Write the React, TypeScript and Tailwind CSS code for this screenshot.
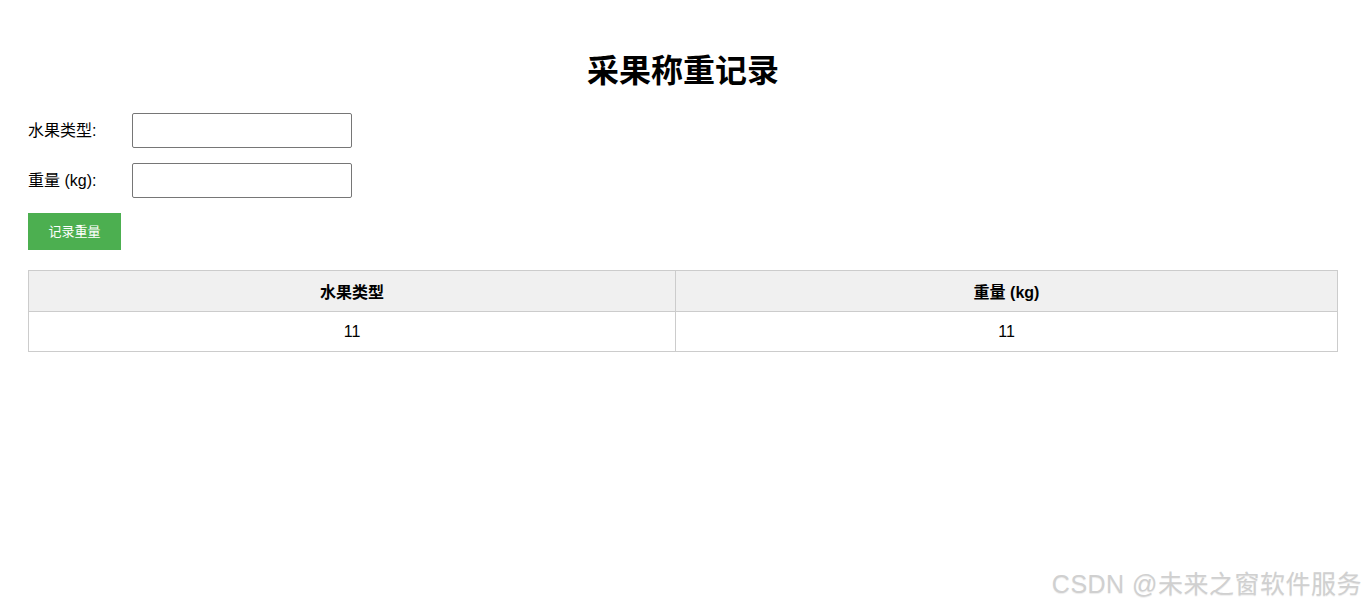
export default function App() {
  const font = { fontFamily: '"Liberation Sans", "Noto Sans CJK SC", sans-serif' };
  return (
    <div className="relative min-h-[607px] bg-white text-black px-[28px] pt-[53px]" style={font}>
      <h1 className="text-[32px] leading-[37px] font-bold text-center mb-[23px]">采果称重记录</h1>
      <div className="flex flex-col gap-[15px]">
        <div className="flex items-center">
          <label className="w-[104px] text-[16px] leading-[18px]">水果类型:</label>
          <input className="w-[220px] h-[35px] border border-[#767676] rounded-[2px] px-2 outline-none" />
        </div>
        <div className="flex items-center">
          <label className="w-[104px] text-[16px] leading-[18px]">重量 (kg):</label>
          <input className="w-[220px] h-[35px] border border-[#767676] rounded-[2px] px-2 outline-none" />
        </div>
        <div>
          <button className="w-[93px] h-[37px] bg-[#4caf50] text-white text-[13px] leading-[15px]">记录重量</button>
        </div>
      </div>
      <div className="mt-[20px] border border-[#cccccc] grid grid-cols-[647px_1fr] text-[16px]">
        <div className="h-[41px] pt-[3px] bg-[#f0f0f0] border-r border-b border-[#cccccc] flex items-center justify-center font-bold">水果类型</div>
        <div className="h-[41px] pt-[3px] bg-[#f0f0f0] border-b border-[#cccccc] flex items-center justify-center font-bold">重量 (kg)</div>
        <div className="h-[39px] border-r border-[#cccccc] flex items-center justify-center">11</div>
        <div className="h-[39px] flex items-center justify-center">11</div>
      </div>
      <div className="absolute right-[4px] bottom-[9px] text-[25px] leading-[28px] font-normal tracking-[0.5px] text-[#d0d0d0]" style={{ ...font, textShadow: '0 1px 1px rgba(0,0,0,0.08)' }}>
        CSDN @未来之窗软件服务
      </div>
    </div>
  );
}
